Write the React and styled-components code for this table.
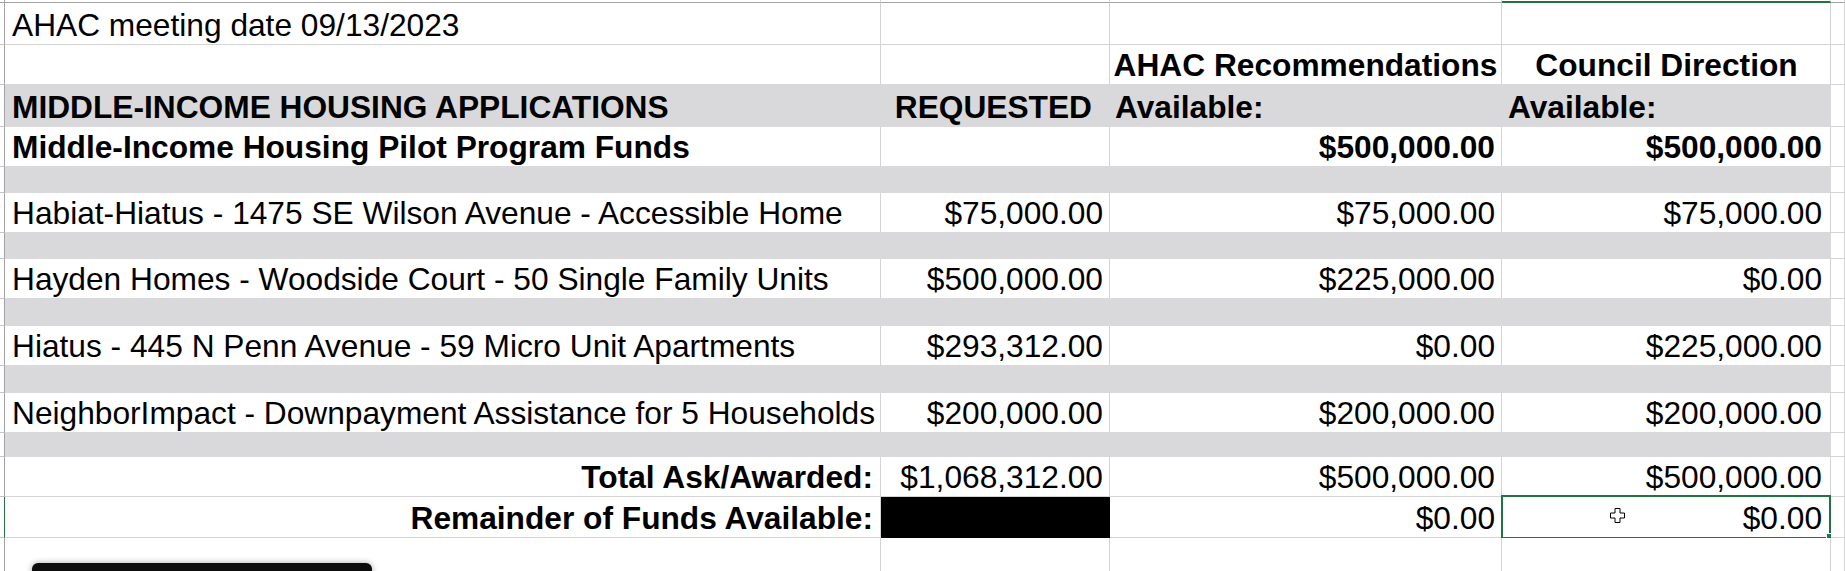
import React from 'react';
import styled, { createGlobalStyle } from 'styled-components';

const GRID = '#d4d4d4';
const BAND = '#d9d9dc';
const HEAD_LINE = '#a3a3a3';
const SELECT = '#217346';
const COLS = '5px 876px 229px 392px 329px 1fr';

const Global = createGlobalStyle`
  html, body { margin: 0; padding: 0; background: #ffffff; overflow: hidden; }
  body { font-family: "Liberation Sans", Arial, sans-serif; }
`;

const Sheet = styled.div`
  position: relative;
  width: 1845px;
  height: 571px;
  overflow: hidden;
  background: #ffffff;
`;

const ColHeaderStrip = styled.div`
  display: grid;
  grid-template-columns: ${COLS};
  height: 3px;
`;

const ColHead = styled.div`
  box-sizing: border-box;
  height: 3px;
  border-bottom: ${p => (p.$active ? `2px solid ${SELECT}` : `1px solid ${HEAD_LINE}`)};
  border-right: 1px solid ${p => (p.$corner ? HEAD_LINE : GRID)};
`;

const Row = styled.div`
  display: grid;
  grid-template-columns: ${COLS};
  height: ${p => p.$h}px;
`;

const RowHead = styled.div`
  box-sizing: border-box;
  background: #ffffff;
  border-right: 1px solid ${p => (p.$active ? SELECT : HEAD_LINE)};
  border-bottom: 1px solid #c4c4c4;
`;

const Cell = styled.div`
  position: relative;
  box-sizing: border-box;
  display: flex;
  align-items: flex-end;
  justify-content: ${p => (p.$align === 'right' ? 'flex-end' : p.$align === 'center' ? 'center' : 'flex-start')};
  padding: 0 ${p => p.$pr ?? 6}px 1px ${p => p.$pl ?? 7}px;
  background: ${p => p.$fill || '#ffffff'};
  border-right: 1px solid ${p => p.$rightLine};
  border-bottom: 1px solid ${p => p.$bottomLine};
  font-family: "Liberation Sans", Arial, sans-serif;
  font-size: 31.7px;
  line-height: 36px;
  font-weight: ${p => (p.$bold ? 700 : 400)};
  color: #000000;
  white-space: nowrap;
`;

const Selection = styled.div`
  position: absolute;
  top: -2px;
  left: -1px;
  right: -1px;
  bottom: -2px;
  border: 2px solid ${SELECT};
  pointer-events: none;
`;

const FillHandle = styled.div`
  position: absolute;
  right: -4px;
  bottom: -4px;
  width: 6px;
  height: 6px;
  background: ${SELECT};
  border: 1px solid #ffffff;
`;

const Cursor = styled.svg`
  position: absolute;
  left: 108px;
  top: 11px;
  width: 15px;
  height: 15px;
`;

const PlayerBar = styled.div`
  position: absolute;
  left: 32px;
  top: 563px;
  width: 340px;
  height: 14px;
  background: #0d0d0d;
  border-radius: 6px 6px 0 0;
  box-shadow: 0 0 6px rgba(0, 0, 0, 0.35);
`;

const B = { bold: true };
const R = { align: 'right' };

const rows = [
  { h: 42, cells: [{ t: 'AHAC meeting date 09/13/2023' }, {}, {}, {}] },
  { h: 40, cells: [{}, {}, { t: 'AHAC Recommendations', ...B, align: 'center', pl: 4, pr: 4 }, { t: 'Council Direction', ...B, align: 'center' }] },
  { h: 42, band: true, cells: [{ t: 'MIDDLE-INCOME HOUSING APPLICATIONS', ...B }, { t: 'REQUESTED', ...B, ...R, pr: 17 }, { t: 'Available:', ...B, pl: 5 }, { t: 'Available:', ...B, pl: 6 }] },
  { h: 40, cells: [{ t: 'Middle-Income Housing Pilot Program Funds', ...B }, {}, { t: '$500,000.00', ...B, ...R }, { t: '$500,000.00', ...B, ...R, pr: 8 }] },
  { h: 26, band: true },
  { h: 40, cells: [{ t: 'Habiat-Hiatus - 1475 SE Wilson Avenue - Accessible Home' }, { t: '$75,000.00', ...R }, { t: '$75,000.00', ...R }, { t: '$75,000.00', ...R, pr: 8 }] },
  { h: 26, band: true },
  { h: 40, cells: [{ t: 'Hayden Homes - Woodside Court - 50 Single Family Units' }, { t: '$500,000.00', ...R }, { t: '$225,000.00', ...R }, { t: '$0.00', ...R, pr: 8 }] },
  { h: 27, band: true },
  { h: 40, cells: [{ t: 'Hiatus - 445 N Penn Avenue - 59 Micro Unit Apartments' }, { t: '$293,312.00', ...R }, { t: '$0.00', ...R }, { t: '$225,000.00', ...R, pr: 8 }] },
  { h: 27, band: true },
  { h: 40, cells: [{ t: 'NeighborImpact - Downpayment Assistance for 5 Households' }, { t: '$200,000.00', ...R }, { t: '$200,000.00', ...R }, { t: '$200,000.00', ...R, pr: 8 }] },
  { h: 24, band: true },
  { h: 40, cells: [{ t: 'Total Ask/Awarded:', ...B, ...R, pr: 7 }, { t: '$1,068,312.00', ...R }, { t: '$500,000.00', ...R }, { t: '$500,000.00', ...R, pr: 8 }] },
  { h: 41, active: true, cells: [{ t: 'Remainder of Funds Available:', ...B, ...R, pr: 7 }, { fill: '#000000' }, { t: '$0.00', ...R }, { t: '$0.00', ...R, pr: 8, selected: true }] },
  { h: 41, cells: [{}, {}, {}, {}] },
];

function CrossCursor() {
  return (
    <Cursor viewBox="0 0 15 15">
      <polygon
        points="5,0.5 10,0.5 10,5 14.5,5 14.5,10 10,10 10,14.5 5,14.5 5,10 0.5,10 0.5,5 5,5"
        fill="#ffffff"
        stroke="#000000"
        strokeWidth="1"
      />
    </Cursor>
  );
}

export default function App() {
  return (
    <>
      <Global />
      <Sheet>
        <ColHeaderStrip>
          <ColHead $corner />
          <ColHead />
          <ColHead />
          <ColHead />
          <ColHead $active />
          <ColHead />
        </ColHeaderStrip>
        {rows.map((row, i) => {
          const next = rows[i + 1];
          const nextBand = next && next.band;
          const cells = row.cells || [{}, {}, {}, {}];
          return (
            <Row key={i} $h={row.h}>
              <RowHead $active={row.active} />
              {cells.map((c, j) => {
                const fill = row.band ? BAND : c.fill;
                const rightLine = row.band ? BAND : c.fill ? c.fill : GRID;
                const bottomLine = row.band ? BAND : c.fill ? c.fill : nextBand ? BAND : GRID;
                return (
                  <Cell
                    key={j}
                    $fill={fill}
                    $rightLine={rightLine}
                    $bottomLine={bottomLine}
                    $bold={c.bold}
                    $align={c.align}
                    $pr={c.pr}
                    $pl={c.pl}
                  >
                    {c.t}
                    {c.selected && (
                      <>
                        <Selection />
                        <FillHandle />
                        <CrossCursor />
                      </>
                    )}
                  </Cell>
                );
              })}
              <Cell $rightLine={GRID} $bottomLine={GRID} />
            </Row>
          );
        })}
        <PlayerBar />
      </Sheet>
    </>
  );
}
